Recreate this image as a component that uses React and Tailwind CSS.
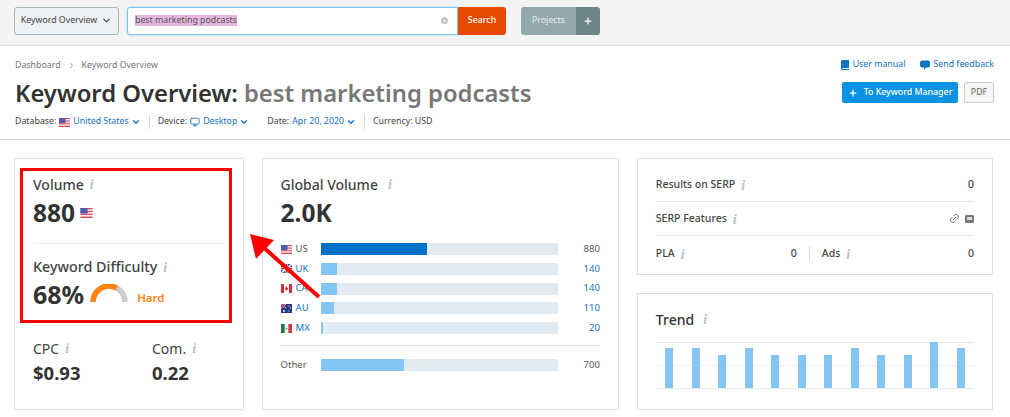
import React from "react";
import { ChevronDown, Monitor, Plus, Link2, ChevronRight } from "lucide-react";

const Us = ({ w = 11, h = 9 }) => (
  <svg width={w} height={h} viewBox="0 0 11 9" className="inline-block shrink-0">
    <rect width="11" height="9" fill="#e9e3e6" />
    <rect y="0" width="11" height="1" fill="#d9474f" />
    <rect y="2.6" width="11" height="1" fill="#d9474f" />
    <rect y="5.2" width="11" height="1" fill="#d9474f" />
    <rect y="7.8" width="11" height="1.2" fill="#d9474f" />
    <rect width="6.5" height="5" fill="#5558a8" />
  </svg>
);
const Uk = () => (
  <svg width="11" height="9" viewBox="0 0 11 9" className="shrink-0">
    <rect width="11" height="9" fill="#3d4a8c" />
    <path d="M0 0L11 9M11 0L0 9" stroke="#eee" strokeWidth="1.6" />
    <path d="M5.5 0V9M0 4.5H11" stroke="#eee" strokeWidth="2.4" />
    <path d="M5.5 0V9M0 4.5H11" stroke="#cf3a45" strokeWidth="1.1" />
  </svg>
);
const Ca = () => (
  <svg width="11" height="9" viewBox="0 0 11 9" className="shrink-0">
    <rect width="11" height="9" fill="#fff" />
    <rect width="3" height="9" fill="#dc2b36" />
    <rect x="8" width="3" height="9" fill="#dc2b36" />
    <path d="M5.5 1.8L6.5 4L7.3 3.7L6.8 5.8H5.8V7H5.2V5.8H4.2L3.7 3.7L4.5 4Z" fill="#dc2b36" />
  </svg>
);
const Au = () => (
  <svg width="11" height="9" viewBox="0 0 11 9" className="shrink-0">
    <rect width="11" height="9" fill="#2b3a86" />
    <path d="M0 0L5 4M5 0L0 4" stroke="#ddd" strokeWidth="0.8" />
    <path d="M2.5 0V4M0 2H5" stroke="#d9474f" strokeWidth="1" />
    <circle cx="8" cy="2" r="0.6" fill="#fff" />
    <circle cx="9.5" cy="4" r="0.6" fill="#fff" />
    <circle cx="8" cy="7" r="0.6" fill="#fff" />
    <circle cx="3" cy="7" r="0.9" fill="#fff" />
  </svg>
);
const Mx = () => (
  <svg width="11" height="9" viewBox="0 0 11 9" className="shrink-0">
    <rect width="11" height="9" fill="#fff" />
    <rect width="3.7" height="9" fill="#1c7a4a" />
    <rect x="7.3" width="3.7" height="9" fill="#d33a43" />
    <circle cx="5.5" cy="4.5" r="1" fill="#9b7b4f" />
  </svg>
);

const Info = ({ className = "" }) => (
  <span className={`mt-[2px] font-['Liberation_Serif',serif] italic font-bold text-[14px] leading-none text-[#b3c4cb] ${className}`}>i</span>
);

const rows = [
  { flag: <Us />, code: "US", w: 44.7, value: "880", active: true },
  { flag: <Uk />, code: "UK", w: 7, value: "140" },
  { flag: <Ca />, code: "CA", w: 7, value: "140" },
  { flag: <Au />, code: "AU", w: 5.7, value: "110" },
  { flag: <Mx />, code: "MX", w: 1.2, value: "20" },
];
const trend = [40, 40, 33, 40, 33, 33, 33, 40, 33, 33, 46, 40];

export default function App() {
  return (
    <div className="relative w-[1010px] h-[417px] overflow-hidden bg-white font-['Noto_Sans',sans-serif] text-[#333]">
      {/* Top bar */}
      <div className="flex items-center h-[46px] bg-[#f4f4f4] border-b border-[#e0e0e0] pl-[14px] pb-[5px] pt-[1px]">
        <div className="flex items-center justify-center gap-[4px] w-[105px] h-[28px] rounded-[3px] border border-[#a9b8bf] bg-[#eef1f3] text-[8.8px] text-[#444]">
          Keyword Overview
          <ChevronDown size={11} strokeWidth={2.5} />
        </div>
        <div className="ml-[8px] flex items-center w-[331px] h-[28px] rounded-l-[3px] border border-[#7cc4f2] bg-white pl-[7px] pr-[9px] shadow-[0_0_2px_#9ad4f7]">
          <span className="bg-[#e6b6de] text-[8.8px] leading-[11px] text-[#555]">best marketing podcasts</span>
          <span className="ml-auto flex items-center justify-center w-[7px] h-[7px] rounded-full bg-[#c4c4c4] text-[6px] leading-none text-white">×</span>
        </div>
        <div className="flex items-center justify-center w-[48px] h-[28px] rounded-r-[3px] bg-[#e64a00] text-[8.8px] font-medium text-white">Search</div>
        <div className="ml-[15px] flex items-center justify-center w-[55px] h-[28px] rounded-l-[3px] bg-[#93a8ae] text-[8.8px] text-[#e8eeee]">Projects</div>
        <div className="flex items-center justify-center w-[24px] h-[28px] rounded-r-[3px] bg-[#6f858c] text-white">
          <Plus size={10} strokeWidth={3} />
        </div>
      </div>

      {/* Page header */}
      <div className="relative h-[94px] border-b border-[#dcdcdc] px-[15px]">
        <div className="flex items-center pt-[12px] h-[27px] text-[8.8px] text-[#777]">
          Dashboard
          <ChevronRight size={9} className="mx-[6px]" />
          Keyword Overview
        </div>
        <h1 className="mt-[2px] h-[36px] text-[23.8px] leading-[36px] font-semibold whitespace-nowrap text-[#333]">
          Keyword Overview: <span className="text-[#777]">best marketing podcasts</span>
        </h1>
        <div className="flex items-center mt-[3px] h-[16px] text-[8.8px] text-[#444] whitespace-nowrap">
          <span>Database:</span>
          <span className="ml-[3px] flex"><Us /></span>
          <span className="ml-[3px] text-[#1274c0]">United States</span>
          <ChevronDown size={10} strokeWidth={3} className="ml-[2px] text-[#1274c0]" />
          <span className="mx-[8px] h-[14px] w-px bg-[#d8d8d8]" />
          <span>Device:</span>
          <Monitor size={10} strokeWidth={2} className="ml-[3px] text-[#1274c0]" />
          <span className="ml-[3px] text-[#1274c0]">Desktop</span>
          <ChevronDown size={10} strokeWidth={3} className="ml-[2px] text-[#1274c0]" />
          <span className="ml-[18px]">Date:</span>
          <span className="ml-[3px] text-[#1274c0]">Apr 20, 2020</span>
          <ChevronDown size={10} strokeWidth={3} className="ml-[2px] text-[#1274c0]" />
          <span className="mx-[8px] h-[14px] w-px bg-[#d8d8d8]" />
          <span>Currency: USD</span>
        </div>
        <div className="absolute right-[16px] top-[10px] flex items-center h-[18px] text-[8.8px] text-[#1274c0]">
          <svg width="8" height="10" viewBox="0 0 8 10">
            <path d="M1.5 0H8V8H1.5A1 1 0 0 0 1.5 9H8V10H1.5A1.5 1.5 0 0 1 0 8.5V1.5A1.5 1.5 0 0 1 1.5 0Z" fill="#1274c0" />
          </svg>
          <span className="ml-[4px]">User manual</span>
          <svg width="10" height="10" viewBox="0 0 10 10" className="ml-[15px]">
            <path d="M2 0.5H8A2 2 0 0 1 10 2.5V5.5A2 2 0 0 1 8 7.5H6L4 10V7.5H2A2 2 0 0 1 0 5.5V2.5A2 2 0 0 1 2 0.5Z" fill="#1274c0" />
          </svg>
          <span className="ml-[3px]">Send feedback</span>
        </div>
        <div className="absolute right-[16px] top-[36px] flex items-center gap-[6px]">
          <div className="flex items-center justify-center gap-[6px] w-[116px] h-[21px] rounded-[2px] bg-[#0a92e4] text-[8.8px] font-medium text-white">
            <Plus size={10} strokeWidth={3} />
            To Keyword Manager
          </div>
          <div className="flex items-center justify-center w-[30px] h-[21px] rounded-[2px] border border-[#c8cfd2] bg-[#f5f5f5] text-[8.8px] text-[#666]">PDF</div>
        </div>
      </div>

      {/* Cards */}
      <div className="flex items-stretch gap-[18px] pl-[14px] pr-[17px] pt-[18px]">
        {/* Left card */}
        <div className="w-[230px] h-[252px] border border-[#dfdfdf] rounded-[1px] px-[18px] pt-[15px]">
          <div className="flex items-center h-[20px] text-[14px] font-medium text-[#444]">
            Volume <Info className="ml-[6px]" />
          </div>
          <div className="flex items-center h-[36px] mt-[1px] text-[24.5px] font-bold">
            880 <span className="ml-[5px] flex"><Us w={13} h={10} /></span>
          </div>
          <div className="mt-[12px] h-px w-[191px] bg-[#eeeeee]" />
          <div className="flex items-center h-[20px] mt-[13px] text-[14.3px] font-medium text-[#444]">
            Keyword Difficulty <Info className="ml-[6px]" />
          </div>
          <div className="flex items-center h-[36px] text-[25px] font-bold">
            68%
            <svg width="38" height="20" viewBox="0 0 38 20" className="ml-[6px] mb-[2px]">
              <path d="M3 18A16 16 0 0 1 35 18" fill="none" stroke="#cccccc" strokeWidth="5.5" />
              <path d="M3 18A16 16 0 0 1 26.5 4" fill="none" stroke="#ff8410" strokeWidth="5.5" />
            </svg>
            <span className="ml-[9px] mt-[5px] text-[11.5px] font-semibold text-[#ff8410]">Hard</span>
          </div>
          <div className="mt-[12px] h-px w-[191px] bg-[#eeeeee]" />
          <div className="flex mt-[12px]">
            <div className="w-[119px]">
              <div className="flex items-center h-[20px] text-[14px] text-[#444]">CPC <Info className="ml-[6px]" /></div>
              <div className="mt-[3px] h-[24px] leading-[24px] text-[18.5px] font-bold">$0.93</div>
            </div>
            <div>
              <div className="flex items-center h-[20px] text-[14px] text-[#444]">Com. <Info className="ml-[6px]" /></div>
              <div className="mt-[3px] h-[24px] leading-[24px] text-[18.5px] font-bold">0.22</div>
            </div>
          </div>
        </div>

        {/* Middle card */}
        <div className="w-[358px] h-[252px] border border-[#dfdfdf] rounded-[1px] px-[18px] pt-[15px]">
          <div className="flex items-center h-[20px] text-[14px] font-medium text-[#444]">
            Global Volume <Info className="ml-[10px]" />
          </div>
          <div className="flex items-center h-[36px] mt-[1px] text-[24.5px] font-bold">2.0K</div>
          <div className="flex flex-col gap-[7.8px] mt-[12px]">
            {rows.map((r) => (
              <div key={r.code} className="flex items-center h-[12px] text-[9.5px]">
                {r.flag}
                <span className={`ml-[4px] w-[25px] ${r.active ? "text-[#555]" : "text-[#1274c0]"}`}>{r.code}</span>
                <div className="w-[237px] h-[12px] rounded-[1px] bg-[#e3ebf2]">
                  <div className={`h-full ${r.active ? "bg-[#0071c7]" : "bg-[#85c5f4]"}`} style={{ width: `${r.w}%` }} />
                </div>
                <span className={`ml-auto ${r.active ? "text-[#555]" : "text-[#1274c0]"}`}>{r.value}</span>
              </div>
            ))}
          </div>
          <div className="mt-[11px] h-px bg-[#dfdfdf]" />
          <div className="flex items-center h-[12px] mt-[13px] text-[9.5px] text-[#555]">
            <span className="w-[40px]">Other</span>
            <div className="w-[237px] h-[12px] rounded-[1px] bg-[#e3ebf2]">
              <div className="h-full w-[35%] bg-[#85c5f4]" />
            </div>
            <span className="ml-auto">700</span>
          </div>
        </div>

        {/* Right column */}
        <div className="flex flex-col gap-[18px] w-[357px]">
          <div className="h-[117px] border border-[#dfdfdf] rounded-[1px] px-[18px] pt-[9px] text-[10.5px] font-medium text-[#444]">
            <div className="flex items-center h-[34px] border-b border-[#e6e6e6]">
              Results on SERP <Info className="ml-[6px]" />
              <span className="ml-auto">0</span>
            </div>
            <div className="flex items-center h-[34px] border-b border-[#e6e6e6]">
              SERP Features <Info className="ml-[6px]" />
              <Link2 size={11} className="ml-auto -rotate-45 text-[#666]" />
              <span className="ml-[5px] w-[9px] h-[8px] rounded-[1px] bg-[#777] border border-[#777] flex items-center justify-center">
                <span className="block w-[5px] h-[3px] bg-[#ddd]" />
              </span>
            </div>
            <div className="flex items-center h-[35px]">
              <div className="flex items-center w-[141px]">
                PLA <Info className="ml-[6px]" />
                <span className="ml-auto">0</span>
              </div>
              <span className="mx-[12px] h-[15px] w-px bg-[#dddddd]" />
              <div className="flex items-center flex-1">
                Ads <Info className="ml-[6px]" />
                <span className="ml-auto">0</span>
              </div>
            </div>
          </div>
          <div className="h-[117px] border border-[#dfdfdf] rounded-[1px] px-[18px] pt-[15px]">
            <div className="flex items-center h-[20px] text-[14px] font-medium text-[#333]">
              Trend <Info className="ml-[9px]" />
            </div>
            <div className="relative mt-[13px] h-[47px] border-t border-b border-[#e4ebef]">
              <div className="absolute left-0 right-0 top-[22px] h-px bg-[#eef1f3]" />
              <div className="relative flex items-end justify-around h-full">
                {trend.map((h, i) => (
                  <div key={i} className="w-[8px] bg-[#85c5f4]" style={{ height: h }} />
                ))}
              </div>
            </div>
          </div>
        </div>
      </div>

      {/* Annotations */}
      <div className="absolute left-[20px] top-[168px] w-[212px] h-[155px] border-[3px] border-[#ff0000] pointer-events-none" />
      <svg width="1010" height="417" className="absolute left-0 top-0 pointer-events-none">
        <path d="M319 297L262 246" stroke="#ff0000" strokeWidth="4" />
        <path d="M250 234L274 240L256 259Z" fill="#ff0000" />
      </svg>
    </div>
  );
}
